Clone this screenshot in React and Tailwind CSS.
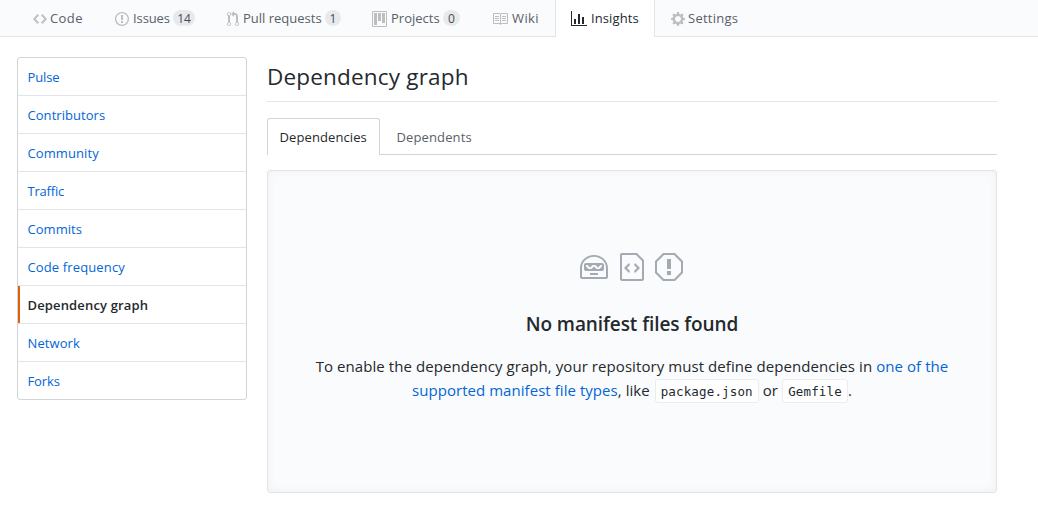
const ICONS = {
  code: [14, 'M9.5 3L8 4.5 11.5 8 8 11.5 9.5 13 14 8 9.5 3zm-5 0L0 8l4.5 5L6 11.5 2.5 8 6 4.5 4.5 3z'],
  issue: [14, 'M7 2.3c3.14 0 5.7 2.56 5.7 5.7s-2.56 5.7-5.7 5.7A5.71 5.71 0 0 1 1.3 8c0-3.14 2.56-5.7 5.7-5.7zM7 1C3.14 1 0 4.14 0 8s3.14 7 7 7 7-3.14 7-7-3.14-7-7-7zm1 3H6v5h2V4zm0 6H6v2h2v-2z'],
  pull: [12, 'M11 11.28V5c-.03-.78-.34-1.47-.94-2.06C9.46 2.35 8.78 2.03 8 2H7V0L4 3l3 3V4h1c.27.02.48.11.69.31.21.2.3.42.31.69v6.28A1.993 1.993 0 0 0 10 15a1.993 1.993 0 0 0 1-3.72zm-1 2.92c-.66 0-1.2-.55-1.2-1.2 0-.65.55-1.2 1.2-1.2.65 0 1.2.55 1.2 1.2 0 .65-.55 1.2-1.2 1.2zM4 3c0-1.11-.89-2-2-2a1.993 1.993 0 0 0-1 3.72v6.56A1.993 1.993 0 0 0 2 15a1.993 1.993 0 0 0 1-3.72V4.72c.59-.34 1-.98 1-1.72zm-.8 10c0 .66-.55 1.2-1.2 1.2-.65 0-1.2-.55-1.2-1.2 0-.65.55-1.2 1.2-1.2.65 0 1.2.55 1.2 1.2zM2 4.2C1.34 4.2.8 3.65.8 3c0-.65.55-1.2 1.2-1.2.65 0 1.2.55 1.2 1.2 0 .65-.55 1.2-1.2 1.2z'],
  project: [15, 'M10 12h3V2h-3v10zm-4-2h3V2H6v8zm-4 4h3V2H2v12zm-1 1h13V1H1v14zM14 0H1a1 1 0 0 0-1 1v14a1 1 0 0 0 1 1h13a1 1 0 0 0 1-1V1a1 1 0 0 0-1-1z'],
  book: [16, 'M3 5h4v1H3V5zm0 3h4V7H3v1zm0 2h4V9H3v1zm11-5h-4v1h4V5zm0 2h-4v1h4V7zm0 2h-4v1h4V9zm2-6v9c0 .55-.45 1-1 1H9.5l-1 1-1-1H2c-.55 0-1-.45-1-1V3c0-.55.45-1 1-1h5.5l1 1 1-1H15c.55 0 1 .45 1 1zm-8 .5L7.5 3H2v9h6V3.5zm7-.5H9.5l-.5.5V12h6V3z'],
  graph: [16, 'M16 14v1H0V0h1v14h15zM5 13H3V8h2v5zm4 0H7V3h2v10zm4 0h-2V6h2v7z'],
  gear: [14, 'M14 8.77v-1.6l-1.94-.64-.45-1.09.88-1.84-1.13-1.13-1.81.91-1.09-.45-.69-1.92h-1.6l-.63 1.94-1.11.45-1.84-.88-1.13 1.13.91 1.81-.45 1.09L0 7.23v1.59l1.94.64.45 1.09-.88 1.84 1.13 1.13 1.81-.91 1.09.45.69 1.92h1.59l.63-1.94 1.11-.45 1.84.88 1.13-1.13-.92-1.81.47-1.09L14 8.75v.02zM7 11c-1.66 0-3-1.34-3-3s1.34-3 3-3 3 1.34 3 3-1.34 3-3 3z'],
  hubot: [14, 'M3 6c-.55 0-1 .45-1 1v2c0 .55.45 1 1 1h8c.55 0 1-.45 1-1V7c0-.55-.45-1-1-1H3zm8 1.75L9.75 9h-1.5L7 7.75 5.75 9h-1.5L3 7.75V7h.75L5 8.25 6.25 7h1.5L9 8.25 10.25 7H11v.75zM5 11h4v1H5v-1zm2-9C3.14 2 0 4.91 0 8.5V13c0 .55.45 1 1 1h12c.55 0 1-.45 1-1V8.5C14 4.91 10.86 2 7 2zm6 11H1V8.5c0-3.09 2.64-5.59 6-5.59s6 2.5 6 5.59V13z'],
  fileCode: [12, 'M8.5 1H1c-.55 0-1 .45-1 1v12c0 .55.45 1 1 1h10c.55 0 1-.45 1-1V4.5L8.5 1zM11 14H1V2h7l3 3v9zM5 6.98L3.5 8.5 5 10l-.5 1L2 8.5 4.5 6l.5.98zM7.5 6L10 8.5 7.5 11l-.5-.98L8.5 8.5 7 7l.5-1z'],
  stop: [14, 'M10 1H4L0 5v6l4 4h6l4-4V5l-4-4zm3 9.5L9.5 14h-5L1 10.5v-5L4.5 2h5L13 5.5v5zM6 4h2v5H6V4zm0 6h2v2H6v-2z'],
};

function Icon({ name, scale = 1, className = '' }) {
  const [w, d] = ICONS[name];
  return (
    <svg width={w * scale} height={16 * scale} viewBox={`0 0 ${w} 16`} fill="currentColor" className={`shrink-0 ${className}`} aria-hidden="true">
      <path fillRule="evenodd" d={d} />
    </svg>
  );
}

const TABS = [
  { icon: 'code', label: 'Code', width: 'w-[82px]', gap: 'ml-[3px]', tracking: 'tracking-[0.4px]' },
  { icon: 'issue', label: 'Issues', count: 14, badge: 'w-[22px]', width: 'w-[112px]', gap: 'ml-1 w-10', tracking: 'tracking-[-0.1px]' },
  { icon: 'pull', label: 'Pull requests', count: 1, badge: 'w-4', width: 'w-[145px]', gap: 'ml-1 w-[82px]', tracking: '' },
  { icon: 'project', label: 'Projects', count: 0, badge: 'w-[17px]', width: 'w-[121px]', gap: 'ml-1 w-[52px]', tracking: '' },
  { icon: 'book', label: 'Wiki', width: 'w-[78px]', iconClass: '-ml-px', gap: 'ml-1', tracking: 'tracking-[0.4px]' },
  { icon: 'graph', label: 'Insights', width: 'w-[100px]', gap: 'ml-1', active: true, tracking: 'tracking-[0.1px]' },
  { icon: 'gear', label: 'Settings', width: 'w-[100px]', gap: 'ml-[3px]', tracking: 'tracking-[0.25px]' },
];

const MENU = [
  { label: 'Pulse', tracking: 'tracking-[-0.1px]' },
  { label: 'Contributors', tracking: 'tracking-[0.05px]' },
  { label: 'Community', tracking: 'tracking-[0.1px]' },
  { label: 'Traffic', tracking: 'tracking-[-0.2px]' },
  { label: 'Commits', tracking: 'tracking-[0.05px]' },
  { label: 'Code frequency', tracking: 'tracking-[0.13px]' },
  { label: 'Dependency graph', active: true, tracking: 'tracking-[0.15px]' },
  { label: 'Network', tracking: 'tracking-[0.1px]' },
  { label: 'Forks', tracking: 'tracking-[-0.1px]' },
];

function RepoTab({ tab }) {
  const look = tab.active
    ? 'border-[#e1e4e8] bg-white text-[#24292e]'
    : 'mb-px border-transparent text-[#586069]';
  return (
    <a href="#" className={`flex items-center border-x pl-[15px] whitespace-nowrap ${tab.width} ${look}`}>
      <Icon name={tab.icon} className={`mt-px ${tab.iconClass ?? ''} ${tab.active ? '' : 'text-[#bcbec0]'}`} />
      <span className={`${tab.gap} ${tab.tracking}`}>{tab.label}</span>
      {tab.count !== undefined && (
        <span className={`flex h-4 items-center justify-center rounded-full bg-[#e7e9eb] text-[12px] font-medium text-[#444d56] ${tab.badge}`}>
          {tab.count}
        </span>
      )}
    </a>
  );
}

function FileName({ children, className }) {
  return (
    <code className={`mt-px inline-block h-6 rounded-[3px] border border-[#eaecef] bg-white text-center align-middle font-['DejaVu_Sans_Mono',monospace] text-[12.5px] leading-6 tracking-[0.15px] ${className}`}>
      {children}
    </code>
  );
}

export default function App() {
  return (
    <div className="h-[512px] overflow-hidden bg-white font-['Open_Sans','Noto_Sans',sans-serif] text-[13px] leading-[21px] text-[#24292e]">
      <nav className="flex h-[37px] bg-[#fafbfc] pl-[17px] shadow-[inset_0_-1px_0_#e1e4e8]">
        {TABS.map((tab) => <RepoTab key={tab.label} tab={tab} />)}
      </nav>

      <div className="flex gap-5 pt-5 pl-[17px]">
        <aside className="h-[343px] w-[230px] rounded-[3px] border border-[#d1d5da]">
          {MENU.map((item) => (
            <a
              key={item.label}
              href="#"
              className={`flex h-[38px] items-center border-b border-[#e1e4e8] last:h-[37px] last:border-b-0 ${item.active ? 'font-semibold text-[#24292e]' : 'text-[#0366d6]'}`}
            >
              <span className={`h-full w-0.5 ${item.active ? 'bg-[#e36209]' : ''}`} />
              <span className={`pt-0.5 pl-[7.5px] ${item.tracking}`}>{item.label}</span>
            </a>
          ))}
        </aside>

        <main className="w-[730px]">
          <h1 className="h-[45px] border-b border-[#e1e4e8] text-[22.5px] leading-[39px] tracking-[0.18px]">Dependency graph</h1>

          <div className="mt-4 flex h-[37px] border-b border-[#d1d5da]">
            <a href="#" className="-mb-px flex w-[113px] items-center rounded-t-[3px] border border-b-0 border-[#d1d5da] bg-white pl-[11.5px] tracking-[0.1px]">
              Dependencies
            </a>
            <a href="#" className="flex items-center pt-0.5 pl-[16.5px] tracking-[0.13px] text-[#586069]">Dependents</a>
          </div>

          <section className="mt-[15px] flex h-[323px] flex-col items-center rounded-[3px] border border-[#e1e4e8] bg-[#fafbfc] pt-20 shadow-[inset_0_0_10px_rgba(27,31,35,0.05)]">
            <div className="mr-0.5 flex gap-3 text-[#a3aab1]">
              <Icon name="hubot" scale={2} />
              <Icon name="fileCode" scale={2} />
              <Icon name="stop" scale={2} className="-ml-px" />
            </div>
            <h2 className="mt-[26px] text-[19px] leading-[30px] font-semibold tracking-[-0.08px]">No manifest files found</h2>
            <div className="mt-[15px] text-center text-[15px] leading-6 whitespace-nowrap">
              <p className="tracking-[0.07px]">
                To enable the dependency graph, your repository must define dependencies in{' '}
                <a href="#" className="text-[#0366d6]">one of the</a>
              </p>
              <p className="flex justify-center tracking-[0.05px]">
                <a href="#" className="text-[#0366d6]">supported manifest file types</a>, like
                <FileName className="ml-[5px] w-[104px]">package.json</FileName>
                <span className="mx-1">or</span>
                <FileName className="w-[66px]">Gemfile</FileName>.
              </p>
            </div>
          </section>
        </main>
      </div>
    </div>
  );
}
